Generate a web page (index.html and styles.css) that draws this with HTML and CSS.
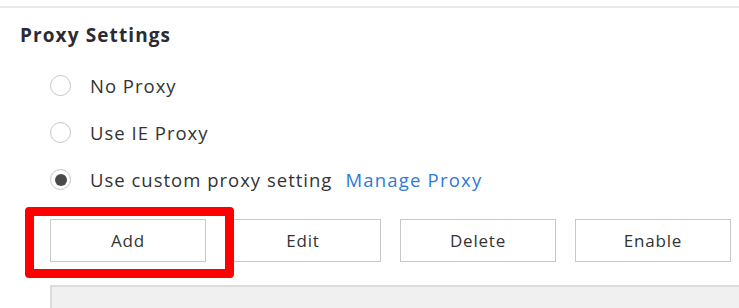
FILE: index.html
```html
<!DOCTYPE html>
<html lang="en">
  <head>
    <meta charset="UTF-8" />
    <meta name="viewport" content="width=device-width, initial-scale=1.0" />
    <title>Proxy Settings</title>
    <link rel="stylesheet" href="styles.css">
  </head>
  <body>
    <div class="top-line"></div>
    <section class="proxy">
      <h2 class="title">Proxy Settings</h2>

      <ul class="options">
        <li class="option">
          <span class="radio"></span>
          <span class="label">No Proxy</span>
        </li>
        <li class="option">
          <span class="radio"></span>
          <span class="label">Use IE Proxy</span>
        </li>
        <li class="option">
          <span class="radio checked"></span>
          <span class="label">Use custom proxy setting</span>
          <a class="link" href="#">Manage Proxy</a>
        </li>
      </ul>

      <div class="btn-row">
        <button class="btn">Add</button>
        <button class="btn">Edit</button>
        <button class="btn">Delete</button>
        <button class="btn">Enable</button>
        <div class="highlight"></div>
      </div>

      <div class="list-box"></div>
    </section>
  </body>
</html>
```

FILE: styles.css
```css
* {
  margin: 0;
  padding: 0;
  box-sizing: border-box;
}

body {
  background: #fff;
  font-family: "Open Sans", "Noto Sans", sans-serif;
  color: #333;
  overflow: hidden;
}

.top-line {
  margin-top: 6px;
  height: 2px;
  background: #e8e8e8;
}

.proxy {
  padding-left: 20px;
}

.title {
  margin-top: 14px;
  font-size: 19px;
  font-weight: 700;
  letter-spacing: 1.1px;
  line-height: 26px;
  color: #2b2b33;
}

.options {
  list-style: none;
  margin-top: 14px;
  padding-left: 30px;
}

.option {
  display: flex;
  align-items: center;
  height: 47px;
  font-size: 18.5px;
  letter-spacing: 1px;
}

.radio {
  width: 21px;
  height: 21px;
  border: 1.5px solid #c6c6c6;
  border-radius: 50%;
  margin-right: 19px;
  display: flex;
  align-items: center;
  justify-content: center;
}

.radio.checked::after {
  content: "";
  width: 12px;
  height: 12px;
  border-radius: 50%;
  background: #4a4a4a;
}

.label {
  color: #333;
}

.link {
  margin-left: 13px;
  color: #2f7ad8;
  letter-spacing: 1.2px;
  text-decoration: none;
}

.btn-row {
  position: relative;
  display: flex;
  gap: 19px;
  margin-top: 16px;
  padding-left: 30px;
}

.btn {
  width: 156px;
  height: 43px;
  background: #fff;
  border: 1.5px solid #c8c8c8;
  font-family: inherit;
  font-size: 17px;
  letter-spacing: 0.8px;
  color: #333;
}

.highlight {
  position: absolute;
  left: 5px;
  top: -12px;
  width: 209px;
  height: 71px;
  border: 9px solid #ff0000;
  border-radius: 4px;
}

.list-box {
  margin-top: 23px;
  margin-left: 30px;
  height: 23px;
  background: #f0f0f0;
  border-top: 2px solid #dcdcdc;
  border-left: 2px solid #dcdcdc;
}
```
